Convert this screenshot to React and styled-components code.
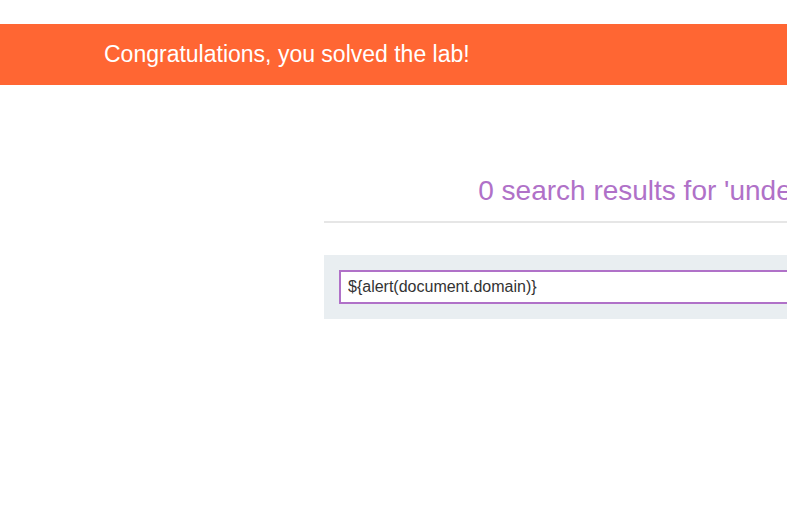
import React from "react";
import styled, { createGlobalStyle } from "styled-components";

const GlobalStyle = createGlobalStyle`
  html, body {
    margin: 0;
    padding: 0;
    background: #fff;
    overflow: hidden;
    font-family: "Liberation Sans", Arial, sans-serif;
  }
`;

const Page = styled.div`
  width: 787px;
  height: 515px;
  overflow: hidden;
  padding-top: 24px;
  box-sizing: border-box;
`;

const Banner = styled.div`
  height: 61px;
  background: #ff6633;
  display: flex;
  align-items: center;
  padding-left: 104px;
  color: #fff;
  font-size: 23px;
`;

const Container = styled.div`
  width: 688px;
  margin-left: 324px;
  padding-top: 89px;
`;

const Heading = styled.h1`
  margin: 0;
  padding-bottom: 13px;
  border-bottom: 2px solid #e6e6e6;
  text-align: center;
  color: #b071c8;
  font-size: 28px;
  font-weight: normal;
  line-height: 34px;
  white-space: nowrap;
`;

const SearchBar = styled.form`
  margin: 32px 0 0;
  padding: 15px;
  background: #e9eef1;
`;

const Field = styled.input`
  display: block;
  width: 100%;
  box-sizing: border-box;
  height: 34px;
  border: 2px solid #b071c8;
  padding: 0 7px;
  font-family: "Liberation Sans", Arial, sans-serif;
  font-size: 16px;
  color: #333;
  background: #fff;
  outline: none;
`;

export default function App() {
  return (
    <>
      <GlobalStyle />
      <Page>
        <Banner>Congratulations, you solved the lab!</Banner>
        <Container>
          <Heading>0 search results for 'undefined'</Heading>
          <SearchBar onSubmit={(e) => e.preventDefault()}>
            <Field type="text" defaultValue="${alert(document.domain)}" />
          </SearchBar>
        </Container>
      </Page>
    </>
  );
}
